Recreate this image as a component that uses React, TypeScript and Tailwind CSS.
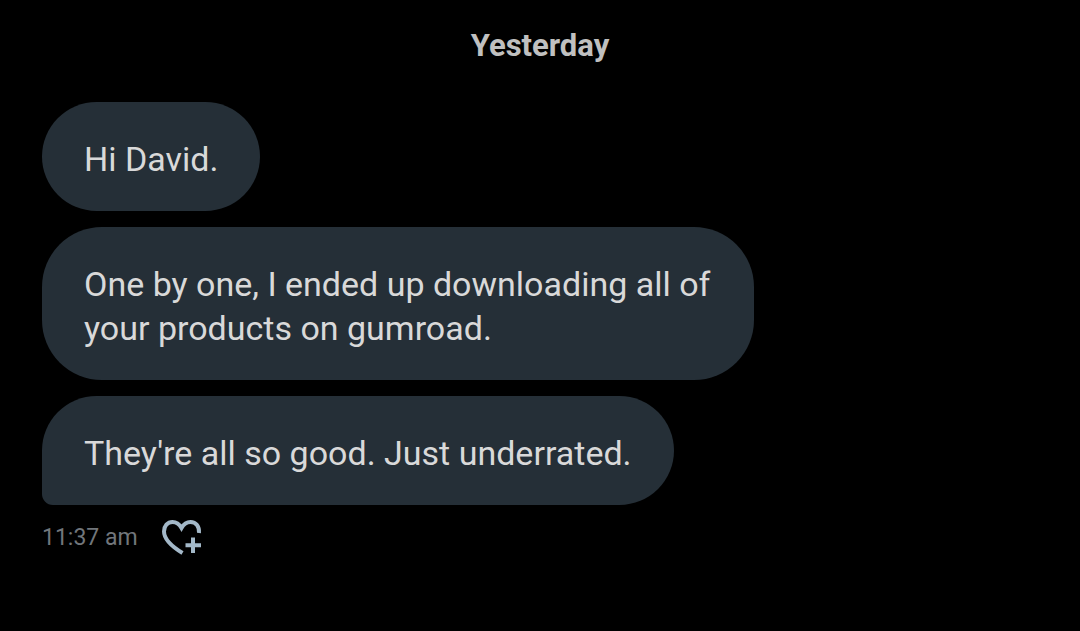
type Message = {
  id: number;
  text: string;
  last?: boolean;
};

const messages: Message[] = [
  { id: 1, text: "Hi David." },
  { id: 2, text: "One by one, I ended up downloading all of your products on gumroad." },
  { id: 3, text: "They're all so good. Just underrated.", last: true },
];

function HeartPlusIcon() {
  return (
    <svg viewBox="0 0 40 36" className="h-9 w-10" fill="none" stroke="currentColor" strokeWidth="4" aria-hidden="true">
      <path d="M20.500 33C9 26 2 19.500 2 11.500C2 6 5.500 2 10.500 2C14.500 2 17.500 4.500 19.500 8C21.500 4.500 24.500 2 28.500 2C34 2 37.500 6.500 37 13" />
      <path d="M31 17.500V33M23.500 25.200H39" />
    </svg>
  );
}

function Bubble({ text, last }: Message) {
  return (
    <li
      className={`max-w-[712px] rounded-[60px] bg-[#252f37] px-[42px] pt-[35px] pb-[30px] text-[34px] leading-[44px] text-[#d9d9d9] ${
        last ? "rounded-bl-xl" : ""
      }`}
    >
      {text}
    </li>
  );
}

export default function App() {
  return (
    <main className="min-h-screen bg-black px-[42px] pt-[25px] font-[Roboto,sans-serif]">
      <h2 className="text-center text-[31px] leading-[42px] font-bold text-[#c0c0c0]">Yesterday</h2>
      <ul className="mt-[35px] flex flex-col items-start gap-4">
        {messages.map((message) => (
          <Bubble key={message.id} {...message} />
        ))}
      </ul>
      <div className="mt-3 flex items-center gap-6">
        <time className="text-[23px] leading-[42px] text-[#71767b]">11:37 am</time>
        <button type="button" aria-label="Add reaction" className="text-[#a3b8c8]">
          <HeartPlusIcon />
        </button>
      </div>
    </main>
  );
}
